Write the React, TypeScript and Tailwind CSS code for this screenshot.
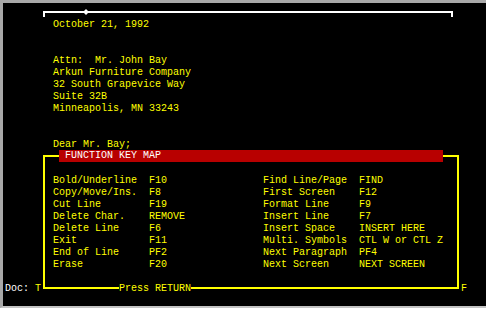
const docLines = [
  'October 21, 1992',
  '',
  '',
  'Attn:  Mr. John Bay',
  'Arkun Furniture Company',
  '32 South Grapevice Way',
  'Suite 32B',
  'Minneapolis, MN 33243',
  '',
  '',
  'Dear Mr. Bay;',
];

const keys: [string, string, string, string][] = [
  ['Bold/Underline', 'F10', 'Find Line/Page', 'FIND'],
  ['Copy/Move/Ins.', 'F8', 'First Screen', 'F12'],
  ['Cut Line', 'F19', 'Format Line', 'F9'],
  ['Delete Char.', 'REMOVE', 'Insert Line', 'F7'],
  ['Delete Line', 'F6', 'Insert Space', 'INSERT HERE'],
  ['Exit', 'F11', 'Multi. Symbols', 'CTL W or CTL Z'],
  ['End of Line', 'PF2', 'Next Paragraph', 'PF4'],
  ['Erase', 'F20', 'Next Screen', 'NEXT SCREEN'],
];

const Ruler = () => (
  <svg width="412" height="12" className="ml-[40px] block">
    <rect x="0" y="4" width="410" height="2" fill="#ffffff" />
    <rect x="0" y="4" width="2" height="6" fill="#ffffff" />
    <rect x="408" y="4" width="2" height="6" fill="#ffffff" />
    <polygon points="43,2 46,5 43,8 40,5" fill="#ffffff" />
  </svg>
);

// popup window drawn over the document
const KeyMap = () => (
  <div className="absolute left-[40px] top-[152px] w-[416px] h-[134px] border-2 border-[#ffff00]">
    <div className="absolute left-[14px] top-[-7px] w-[384px] h-[12px] bg-[#b80000] pl-[6px] text-white">
      FUNCTION KEY MAP
    </div>
    <div className="pt-[18px] pl-[8px] grid grid-cols-[96px_114px_96px_auto] text-[#ffff00]">
      {keys.map((row, i) =>
        row.map((cell, j) => (
          <div key={i + '-' + j} className="h-[12px] whitespace-pre">
            {cell}
          </div>
        ))
      )}
    </div>
    <div className="absolute left-[74px] top-[126px] bg-black text-[#ffff00] whitespace-pre">
      Press RETURN
    </div>
  </div>
);

export default function App() {
  return (
    <div className="w-[488px] h-[310px] bg-white">
      <div className="relative w-[486px] h-[308px] bg-black border-t-[3px] border-l-[3px] border-b-2 border-t-[#a8a8a8] border-l-[#a8a8a8] border-b-[#c4c4c4] pt-[4px] font-['Liberation_Mono',monospace] text-[10px] leading-[12px] overflow-hidden">
        <div className="h-[276px]">
          <Ruler />
          <div className="ml-[50px] text-[#ffff00]">
            {docLines.map((line, i) => (
              <div key={i} className="h-[12px] whitespace-pre">
                {line}
              </div>
            ))}
          </div>
        </div>
        <div className="h-[12px] pl-[2px] pr-[19px] flex justify-between whitespace-pre">
          <div>
            <span className="text-white">Doc: </span>
            <span className="text-[#ffff00]">T</span>
          </div>
          <span className="text-[#ffff00]">F</span>
        </div>
        <KeyMap />
      </div>
    </div>
  );
}
